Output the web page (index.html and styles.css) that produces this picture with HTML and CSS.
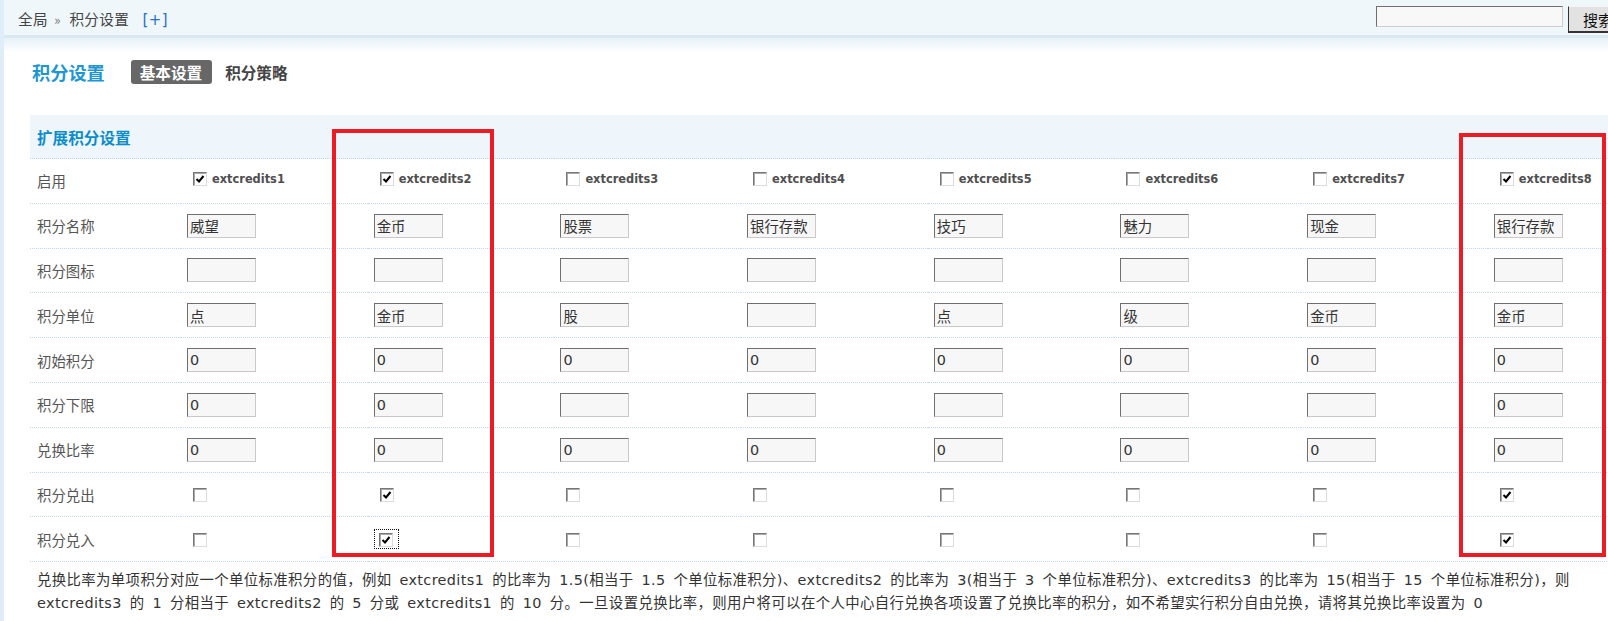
FILE: index.html
```html
<!DOCTYPE html>
<html lang="zh-CN">
<head>
  <meta charset="UTF-8" />
  <title>积分设置</title>
  <link rel="stylesheet" href="styles.css">
</head>
<body>

  <div class="topbar">
    <div class="crumb">全局 <span class="sep">»</span> 积分设置 <a href="#" class="add">[+]</a></div>
    <form class="search">
      <input type="text" class="search-input" />
      <button type="button">搜索</button>
    </form>
  </div>

  <div class="main">
    <div class="title-bar">
      <h1>积分设置</h1>
      <ul class="tabs">
        <li class="current">基本设置</li>
        <li>积分策略</li>
      </ul>
    </div>

    <div class="table-wrap">
      <table class="credits">
        <colgroup>
          <col class="col-label">
          <col class="col-data"><col class="col-data"><col class="col-data"><col class="col-data">
          <col class="col-data"><col class="col-data"><col class="col-data"><col class="col-data">
        </colgroup>
        <tr class="head"><th colspan="9">扩展积分设置</th></tr>
        <tr>
          <td class="label">启用</td>
          <td><label class="ext"><span class="cb on"><svg viewBox="0 0 12 12"><polyline points="2.5,6 5,8.5 9.5,3"/></svg></span>extcredits1</label></td>
          <td><label class="ext"><span class="cb on"><svg viewBox="0 0 12 12"><polyline points="2.5,6 5,8.5 9.5,3"/></svg></span>extcredits2</label></td>
          <td><label class="ext"><span class="cb"></span>extcredits3</label></td>
          <td><label class="ext"><span class="cb"></span>extcredits4</label></td>
          <td><label class="ext"><span class="cb"></span>extcredits5</label></td>
          <td><label class="ext"><span class="cb"></span>extcredits6</label></td>
          <td><label class="ext"><span class="cb"></span>extcredits7</label></td>
          <td><label class="ext"><span class="cb on"><svg viewBox="0 0 12 12"><polyline points="2.5,6 5,8.5 9.5,3"/></svg></span>extcredits8</label></td>
        </tr>
        <tr>
          <td class="label">积分名称</td>
          <td><input type="text" class="txt" value="威望"></td>
          <td><input type="text" class="txt" value="金币"></td>
          <td><input type="text" class="txt" value="股票"></td>
          <td><input type="text" class="txt" value="银行存款"></td>
          <td><input type="text" class="txt" value="技巧"></td>
          <td><input type="text" class="txt" value="魅力"></td>
          <td><input type="text" class="txt" value="现金"></td>
          <td><input type="text" class="txt" value="银行存款"></td>
        </tr>
        <tr>
          <td class="label">积分图标</td>
          <td><input type="text" class="txt"></td>
          <td><input type="text" class="txt"></td>
          <td><input type="text" class="txt"></td>
          <td><input type="text" class="txt"></td>
          <td><input type="text" class="txt"></td>
          <td><input type="text" class="txt"></td>
          <td><input type="text" class="txt"></td>
          <td><input type="text" class="txt"></td>
        </tr>
        <tr>
          <td class="label">积分单位</td>
          <td><input type="text" class="txt" value="点"></td>
          <td><input type="text" class="txt" value="金币"></td>
          <td><input type="text" class="txt" value="股"></td>
          <td><input type="text" class="txt"></td>
          <td><input type="text" class="txt" value="点"></td>
          <td><input type="text" class="txt" value="级"></td>
          <td><input type="text" class="txt" value="金币"></td>
          <td><input type="text" class="txt" value="金币"></td>
        </tr>
        <tr>
          <td class="label">初始积分</td>
          <td><input type="text" class="txt" value="0"></td>
          <td><input type="text" class="txt" value="0"></td>
          <td><input type="text" class="txt" value="0"></td>
          <td><input type="text" class="txt" value="0"></td>
          <td><input type="text" class="txt" value="0"></td>
          <td><input type="text" class="txt" value="0"></td>
          <td><input type="text" class="txt" value="0"></td>
          <td><input type="text" class="txt" value="0"></td>
        </tr>
        <tr>
          <td class="label">积分下限</td>
          <td><input type="text" class="txt" value="0"></td>
          <td><input type="text" class="txt" value="0"></td>
          <td><input type="text" class="txt"></td>
          <td><input type="text" class="txt"></td>
          <td><input type="text" class="txt"></td>
          <td><input type="text" class="txt"></td>
          <td><input type="text" class="txt"></td>
          <td><input type="text" class="txt" value="0"></td>
        </tr>
        <tr>
          <td class="label">兑换比率</td>
          <td><input type="text" class="txt" value="0"></td>
          <td><input type="text" class="txt" value="0"></td>
          <td><input type="text" class="txt" value="0"></td>
          <td><input type="text" class="txt" value="0"></td>
          <td><input type="text" class="txt" value="0"></td>
          <td><input type="text" class="txt" value="0"></td>
          <td><input type="text" class="txt" value="0"></td>
          <td><input type="text" class="txt" value="0"></td>
        </tr>
        <tr>
          <td class="label">积分兑出</td>
          <td><span class="cb"></span></td>
          <td><span class="cb on"><svg viewBox="0 0 12 12"><polyline points="2.5,6 5,8.5 9.5,3"/></svg></span></td>
          <td><span class="cb"></span></td>
          <td><span class="cb"></span></td>
          <td><span class="cb"></span></td>
          <td><span class="cb"></span></td>
          <td><span class="cb"></span></td>
          <td><span class="cb on"><svg viewBox="0 0 12 12"><polyline points="2.5,6 5,8.5 9.5,3"/></svg></span></td>
        </tr>
        <tr>
          <td class="label">积分兑入</td>
          <td><span class="cb"></span></td>
          <td><span class="focus"><span class="cb on"><svg viewBox="0 0 12 12"><polyline points="2.5,6 5,8.5 9.5,3"/></svg></span></span></td>
          <td><span class="cb"></span></td>
          <td><span class="cb"></span></td>
          <td><span class="cb"></span></td>
          <td><span class="cb"></span></td>
          <td><span class="cb"></span></td>
          <td><span class="cb on"><svg viewBox="0 0 12 12"><polyline points="2.5,6 5,8.5 9.5,3"/></svg></span></td>
        </tr>
      </table>

      <p class="tips">兑换比率为单项积分对应一个单位标准积分的值，例如 extcredits1 的比率为 1.5(相当于 1.5 个单位标准积分)、extcredits2 的比率为 3(相当于 3 个单位标准积分)、extcredits3 的比率为 15(相当于 15 个单位标准积分)，则<br>extcredits3 的 1 分相当于 extcredits2 的 5 分或 extcredits1 的 10 分。一旦设置兑换比率，则用户将可以在个人中心自行兑换各项设置了兑换比率的积分，如不希望实行积分自由兑换，请将其兑换比率设置为 0</p>

      <!-- red annotation boxes -->
      <div class="mark mark-a"></div>
      <div class="mark mark-b"></div>
    </div>
  </div>

</body>
</html>
```

FILE: styles.css
```css
html, body {
  overflow: hidden;
}

body {
  margin: 0;
  min-height: 100vh;
  box-sizing: border-box;
  border-left: 4px solid #deedf7;
  background: #fff;
  color: #333;
  font-family: "DejaVu Sans", "Noto Sans CJK SC", sans-serif;
  font-size: 14.4px;
}

/* top bar */
.topbar {
  width: 1624px;
  height: 35px;
  display: flex;
  align-items: flex-start;
  justify-content: space-between;
  background: #eff7fb;
  border-bottom: 3px solid #d9e8f1;
}

.crumb {
  padding: 8px 0 0 14px;
  line-height: 22px;
  font-family: "Noto Sans CJK SC", sans-serif;
  font-size: 14.6px;
  letter-spacing: 0.3px;
  color: #444;
}

.crumb .sep {
  color: #777;
  font-size: 13px;
  margin: 0 5px 0 3px;
}

.crumb .add {
  color: #2e6fc4;
  text-decoration: none;
  font-family: "DejaVu Sans", sans-serif;
  font-size: 15px;
  margin-left: 10px;
}

.search {
  display: flex;
  gap: 5px;
  margin: 6px 0 0;
}

.search-input {
  width: 187px;
  height: 21px;
  box-sizing: border-box;
  border: 1px solid;
  border-color: #6f6f6f #cdcdcd #cdcdcd #6f6f6f;
  background: #f8f8f8;
  padding: 0 2px;
}

.search button {
  width: 60px;
  height: 27px;
  padding: 0 0 0 14px;
  text-align: left;
  border: 1px solid;
  border-width: 1px 1px 2px 1px;
  border-color: #f4f4f4 #333 #333 #333;
  background: #e2e2e2;
  font-family: "Noto Sans CJK SC", sans-serif;
  font-size: 15px;
  color: #111;
}

/* main */
.main {
  padding-left: 26px;
  background: linear-gradient(#e6f1f8, #fff 14px) no-repeat;
}

.title-bar {
  display: flex;
  align-items: center;
  padding-top: 22px;
  height: 24px;
}

.title-bar h1 {
  margin: 0 26px 0 2px;
  font-size: 18.2px;
  line-height: 24px;
  color: #1e96d2;
  font-family: "Noto Sans CJK SC", sans-serif;
}

.tabs {
  display: flex;
  gap: 13px;
  margin: 0;
  padding: 0;
  list-style: none;
}

.tabs li {
  height: 24px;
  line-height: 24px;
  padding: 0 10px 0 9px;
  font-weight: bold;
  font-size: 15.6px;
  color: #444;
  font-family: "Noto Sans CJK SC", sans-serif;
  border-radius: 3px;
}

.tabs li + li {
  padding-left: 0;
}

.tabs .current {
  background: #676767;
  color: #fff;
}

/* credits table */
.table-wrap {
  position: relative;
  margin-top: 31px;
}

.credits {
  width: 1644.6px;
  table-layout: fixed;
  border-collapse: collapse;
}

.col-label { width: 151px; }
.col-data { width: 186.7px; }

.credits th {
  height: 43px;
  padding: 0 0 0 7px;
  text-align: left;
  background: #eef5fb;
  color: #0b8dcb;
  font-size: 15.6px;
  font-family: "Noto Sans CJK SC", sans-serif;
  border-bottom: 1px dotted #bcdaef;
}

.credits td {
  height: 43.8px;
  padding: 0 6px;
  vertical-align: middle;
  border-bottom: 1px dotted #bcdaef;
}

.credits td.label {
  padding-left: 7px;
  color: #555;
  font-family: "Noto Sans CJK SC", sans-serif;
}

.ext {
  display: inline-flex;
  align-items: center;
  font-size: 11.4px;
  font-weight: bold;
  color: #4f4f4f;
}

.cb {
  display: inline-block;
  vertical-align: middle;
  width: 12px;
  height: 12px;
  margin-left: 6px;
  border: 1px solid;
  border-color: #777 #dcdcdc #dcdcdc #777;
  box-shadow: inset 1px 1px 0 #a8a8a8;
  background: #fff;
}

.ext .cb {
  margin-right: 5px;
}

.cb svg {
  display: block;
  width: 12px;
  height: 12px;
  fill: none;
  stroke: #000;
  stroke-width: 2;
}

.focus {
  display: inline-block;
  vertical-align: middle;
  padding: 1px 5px 1px 4px;
  border: 1px dotted #111;
}

.focus .cb {
  margin-left: 0;
}

.txt {
  width: 69px;
  height: 24px;
  box-sizing: border-box;
  padding: 0 2px;
  border: 1px solid;
  border-color: #6f6f6f #c9c9c9 #c9c9c9 #6f6f6f;
  background: #f7f7f7;
  color: #333;
  font-family: "DejaVu Sans", "Noto Sans CJK SC", sans-serif;
  font-size: 14.4px;
  vertical-align: middle;
}

.tips {
  margin: 0;
  padding: 7px 0 0 7px;
  line-height: 23px;
  white-space: nowrap;
  word-spacing: 3px;
  letter-spacing: 0.38px;
  color: #333;
}

/* annotation boxes drawn over the screenshot */
.mark {
  position: absolute;
  box-sizing: border-box;
  border: 4px solid #ed1c24;
}

.mark-a {
  left: 302px;
  top: 14px;
  width: 162px;
  height: 428px;
}

.mark-b {
  left: 1429px;
  top: 18px;
  width: 147px;
  height: 424px;
}
```
